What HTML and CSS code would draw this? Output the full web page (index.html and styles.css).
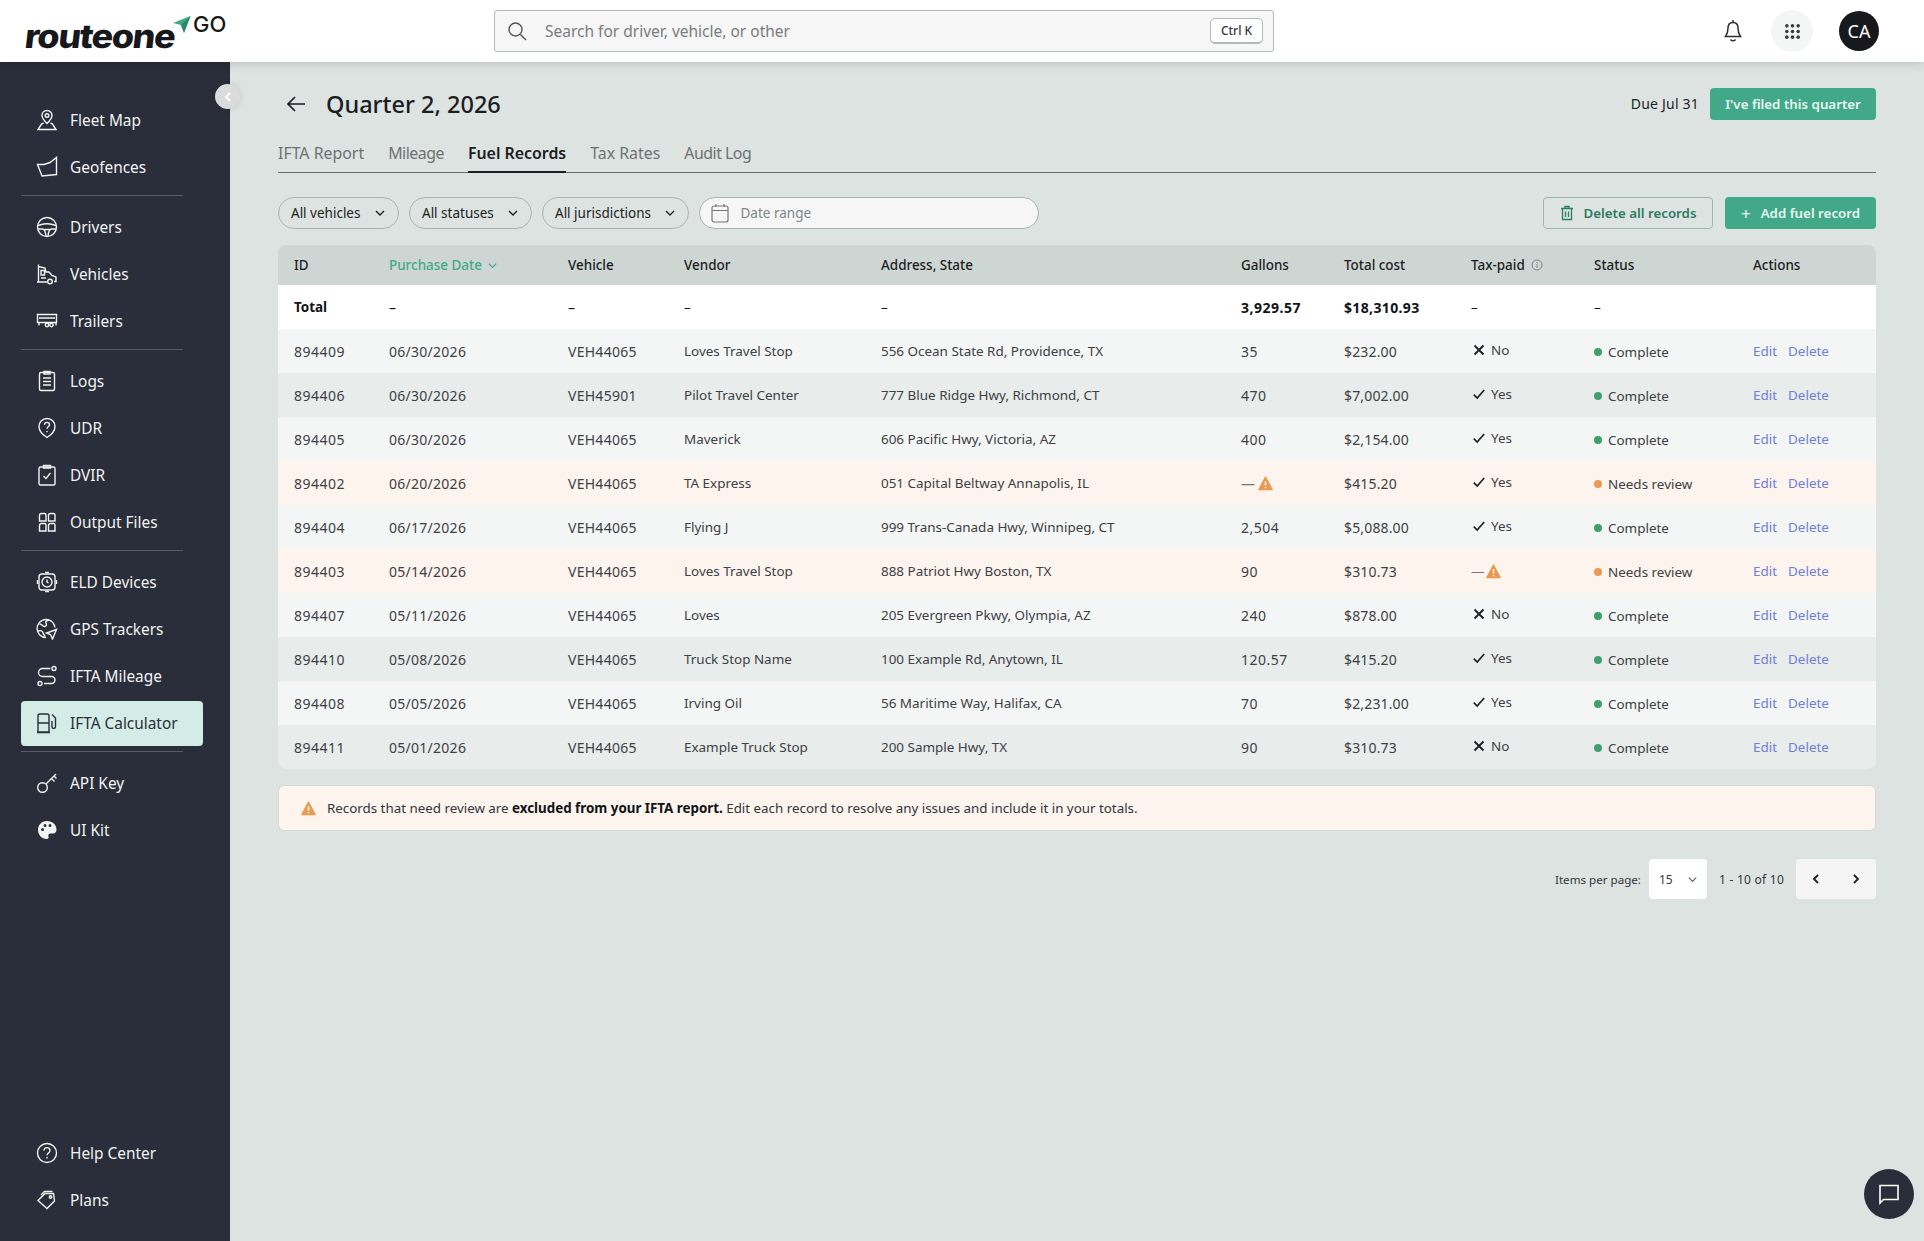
FILE: index.html
```html
<!DOCTYPE html>
<html lang="en">
<head>
    <meta charset="UTF-8">
    <meta name="viewport" content="width=device-width, initial-scale=1.0">
    <title>Fuel Records</title>
    <link rel="stylesheet" href="styles.css">
</head>
<body>

<svg class="sprite" aria-hidden="true">
    <symbol id="warn" viewBox="0 0 16 16"><path d="M8 1.2 15.2 14.6H.8z" fill="#e99a50" stroke="#e99a50" stroke-width="1.4" stroke-linejoin="round"/><path d="M8 5.6v4.6M8 11.6v1.4" stroke="#fff" stroke-width="1.6"/></symbol>
    <symbol id="check" viewBox="0 0 14 14"><path d="M1.8 7.6 5.2 11l7-8" fill="none" stroke="#1b1d22" stroke-width="1.6"/></symbol>
    <symbol id="cross" viewBox="0 0 14 14"><path d="M2.5 2.5l9 9M11.5 2.5l-9 9" fill="none" stroke="#1b1d22" stroke-width="1.8"/></symbol>
    <symbol id="chev" viewBox="0 0 12 12"><path d="M2 4l4 4 4-4" fill="none" stroke="currentColor" stroke-width="1.4"/></symbol>
</svg>

<header class="topbar">
    <div class="logo">
        <span class="logo-word">routeone</span>
        <svg class="logo-plane" viewBox="0 0 18 18"><path d="M0 7 17.5 0 11 17 8 9z" fill="#3fa985"/><path d="M8 9 17.5 0 11 17z" fill="#2c8a69"/></svg>
        <span class="logo-go">GO</span>
    </div>
    <div class="search">
        <svg class="search-icon" viewBox="0 0 20 20"><circle cx="8.5" cy="8.5" r="6.5" fill="none" stroke="#555" stroke-width="1.4"/><path d="M13.4 13.4 19 19" stroke="#555" stroke-width="1.4"/></svg>
        <span class="search-text">Search for driver, vehicle, or other</span>
        <span class="kbd">Ctrl K</span>
    </div>
    <div class="top-actions">
        <svg class="bell" viewBox="0 0 18 24"><path d="M9 3.5c-3.4 0-5 2.6-5 5.6 0 4.4-1 6.4-2.5 8.4h15C15 15.5 14 13.5 14 9.1c0-3-1.6-5.6-5-5.6z" fill="none" stroke="#2b2d33" stroke-width="1.5"/><path d="M9 1v2.5M6.500 20.500c.6 1.600 4.400 1.600 5 0" fill="none" stroke="#2b2d33" stroke-width="1.5"/></svg>
        <div class="apps">
            <svg viewBox="0 0 18 18" width="17" height="17" fill="#3a3c42"><circle cx="3" cy="3" r="1.9"/><circle cx="9" cy="3" r="1.9"/><circle cx="15" cy="3" r="1.9"/><circle cx="3" cy="9" r="1.9"/><circle cx="9" cy="9" r="1.9"/><circle cx="15" cy="9" r="1.9"/><circle cx="3" cy="15" r="1.9"/><circle cx="9" cy="15" r="1.9"/><circle cx="15" cy="15" r="1.9"/></svg>
        </div>
        <div class="avatar">CA</div>
    </div>
</header>

<div class="shell">
    <nav class="sidebar">
        <a class="nav-item"><svg class="nav-icon" viewBox="0 0 22 22"><path d="M11 1.500c-3 0-5 2.200-5 5 0 3 3 6 5 8 2-2 5-5 5-8 0-2.800-2-5-5-5z"/><circle cx="11" cy="6.500" r="1.800"/><path d="M7.500 14 5.500 15 2 20.500h18L16.500 15l-2-1"/></svg>Fleet Map</a>
        <a class="nav-item"><svg class="nav-icon" viewBox="0 0 22 22"><path d="M1.500 8.500 8 8.500 14 6.500 20.500 1.500V18.500L6 20z"/></svg>Geofences</a>
        <div class="nav-sep"></div>
        <a class="nav-item"><svg class="nav-icon" viewBox="0 0 22 22"><circle cx="11" cy="11" r="9.500"/><path d="M1.800 9.500c3-.6 5-1.800 9.200-1.800s6.200 1.200 9.200 1.800M2 13h4.500c2 0 3 2 3.500 7.300M20 13h-4.500c-2 0-3 2-3.500 7.300M8.500 13.500h5"/></svg>Drivers</a>
        <a class="nav-item"><svg class="nav-icon" viewBox="0 0 22 22"><path d="M2.500 1.500v17M1 19h10M2.500 3.500 9 5l1 4h3l3 3.500 4 1.500v4.500h-2M5 7.500h3.500V12H5zM5 15h5"/><circle cx="14" cy="18.500" r="2.300"/></svg>Vehicles</a>
        <a class="nav-item"><svg class="nav-icon" viewBox="0 0 22 22"><path d="M1.500 4.500h19v8h-19zM3 8h16M3 12.500v3M20 12.500v3"/><circle cx="11" cy="15" r="1.700"/><circle cx="15.500" cy="15" r="1.700"/></svg>Trailers</a>
        <div class="nav-sep"></div>
        <a class="nav-item"><svg class="nav-icon" viewBox="0 0 22 22"><rect x="3.500" y="2.500" width="15" height="18" rx="1.500"/><path d="M8 1.500h6v2.500H8zM7 8h8M7 11.500h8M7 15h8"/></svg>Logs</a>
        <a class="nav-item"><svg class="nav-icon" viewBox="0 0 22 22"><path d="M11 20.500C7 18 3 15 3 9.500a8 8 0 0 1 16 0C19 15 15 18 11 20.500z"/><path d="M8.500 7.800c0-3.200 5-3.200 5 0 0 2-2.500 2-2.500 4M11 14v1.200"/></svg>UDR</a>
        <a class="nav-item"><svg class="nav-icon" viewBox="0 0 22 22"><rect x="3" y="3" width="16" height="18" rx="1.500"/><path d="M7.500 1.500h7V4h-7zM7.500 12l2.500 2.500 4.500-5.500"/></svg>DVIR</a>
        <a class="nav-item"><svg class="nav-icon" viewBox="0 0 22 22"><path d="M3.500 10V4.500a2 2 0 0 1 2-2h3A1.500 1.500 0 0 1 10 4v6zM12.500 10V4.500a2 2 0 0 1 2-2h3A1.500 1.500 0 0 1 19 4v6zM3.500 20v-5.500a2 2 0 0 1 2-2h3A1.500 1.500 0 0 1 10 14v6zM12.500 20v-5.500a2 2 0 0 1 2-2h3a1.500 1.500 0 0 1 1.500 1.500v6z"/></svg>Output Files</a>
        <div class="nav-sep"></div>
        <a class="nav-item"><svg class="nav-icon" viewBox="0 0 22 22"><rect x="3" y="3" width="16" height="16" rx="3"/><circle cx="11" cy="11" r="5"/><path d="M11 8.500V11l1.600 1M1.500 9v4M20.500 9v4M9 1.500h4M9 20.500h4"/></svg>ELD Devices</a>
        <a class="nav-item"><svg class="nav-icon" viewBox="0 0 22 22"><path d="M10 19.500a9 9 0 1 1 9-10M3.500 6c3 0 3 2.500 5 2.500s2.500-2 1.500-3.500 1-2.500 3-3M2 13c3-1 4.500 0 5 2s1.500 2 2 3.500"/><path d="M20.500 11.500 10.500 15l4 1.500 2 4.500z"/></svg>GPS Trackers</a>
        <a class="nav-item"><svg class="nav-icon" viewBox="0 0 22 22"><circle cx="18" cy="3.500" r="2"/><circle cx="4" cy="18.500" r="2"/><path d="M14.500 3.500H6.500a4 4 0 0 0 0 8h9a3.500 3.500 0 0 1 0 7H8"/></svg>IFTA Mileage</a>
        <a class="nav-item active"><svg class="nav-icon" viewBox="0 0 22 22"><path d="M2 20V4a2 2 0 0 1 2-2h7a2 2 0 0 1 2 2v16zM2 11h11M1 20.500h13M16 2.500l3.500 3.500v9a1.800 1.800 0 0 1-3.500 0V9"/></svg>IFTA Calculator</a>
        <div class="nav-sep"></div>
        <a class="nav-item"><svg class="nav-icon" viewBox="0 0 22 22"><circle cx="6.500" cy="15.500" r="4.800"/><path d="M10 12 20 2M15.500 6.500l3 3M18 4l2.500 2.500"/></svg>API Key</a>
        <a class="nav-item"><svg class="nav-icon filled" viewBox="0 0 22 22"><path fill-rule="evenodd" d="M11 2C5.500 2 2 6 2 11s4 9 8.500 9c2 0 2.500-1.300 2-2.500-.6-1.500.2-3 2-3h2.500c2 0 3.500-1.500 3.500-3.800C20.500 5.500 16.500 2 11 2zM6.500 12a1.500 1.500 0 1 1 0-3 1.500 1.500 0 0 1 0 3zm2.500-4a1.500 1.500 0 1 1 0-3 1.500 1.500 0 0 1 0 3zm5 0a1.500 1.500 0 1 1 0-3 1.500 1.500 0 0 1 0 3z"/></svg>UI Kit</a>
        <div class="nav-bottom">
            <a class="nav-item"><svg class="nav-icon" viewBox="0 0 22 22"><circle cx="11" cy="11" r="9.500"/><path d="M8 8.500c0-3.800 6-3.800 6 0 0 2.500-3 2.500-3 4.800M11 15v1.400"/></svg>Help Center</a>
            <a class="nav-item"><svg class="nav-icon" viewBox="0 0 22 22"><path d="M2 11.500 9 4.500h8.500l1 7.500-7.500 7.500z"/><circle cx="14.500" cy="8" r="1.200"/><path d="M5 6 8.500 2.500h8"/></svg>Plans</a>
        </div>
    </nav>
    <button class="collapse">
        <svg viewBox="0 0 10 12" width="10" height="12"><path d="M7 2 3 6l4 4" fill="none" stroke="#fff" stroke-width="1.800"/></svg>
    </button>

    <main class="content">
        <div class="page-head">
            <svg class="back" viewBox="0 0 20 18"><path d="M19 9H2M9 2 2 9l7 7" fill="none" stroke="#1b1d22" stroke-width="1.700"/></svg>
            <h1>Quarter 2, 2026</h1>
            <span class="due">Due Jul 31</span>
            <button class="btn btn-green">I've filed this quarter</button>
        </div>

        <div class="tabs">
            <a class="tab">IFTA Report</a>
            <a class="tab tab-tight">Mileage</a>
            <a class="tab current">Fuel Records</a>
            <a class="tab">Tax Rates</a>
            <a class="tab tab-tight">Audit Log</a>
        </div>

        <div class="filters">
            <div class="pill w-vehicles">All vehicles <svg class="pill-chev"><use href="#chev"/></svg></div>
            <div class="pill w-statuses">All statuses <svg class="pill-chev"><use href="#chev"/></svg></div>
            <div class="pill w-juris">All jurisdictions <svg class="pill-chev"><use href="#chev"/></svg></div>
            <div class="pill date-range">
                <svg class="cal" viewBox="0 0 18 20"><rect x="1" y="3" width="16" height="16" rx="2" fill="none" stroke="#777" stroke-width="1.200"/><path d="M1 7.500h16M5 1v3M13 1v3" stroke="#777" stroke-width="1.200"/></svg>
                Date range
            </div>
            <button class="btn btn-outline">
                <svg class="trash" viewBox="0 0 14 16"><path d="M1 3.500h12M5 3.500V1.500h4v2M2.500 3.500v11h9v-11M5.500 6.500v5.500M8.500 6.500v5.500" fill="none" stroke="#2f7a63" stroke-width="1.300"/></svg>
                Delete all records
            </button>
            <button class="btn btn-green btn-add"><span class="plus">+</span> Add fuel record</button>
        </div>

        <table class="records">
            <colgroup>
                <col class="c-id"><col class="c-date"><col class="c-veh"><col class="c-vendor"><col class="c-addr"><col class="c-gal"><col class="c-cost"><col class="c-tax"><col class="c-status"><col class="c-act">
            </colgroup>
            <thead>
                <tr>
                    <th>ID</th>
                    <th class="sorted">Purchase Date <svg class="sort-chev"><use href="#chev"/></svg></th>
                    <th>Vehicle</th>
                    <th>Vendor</th>
                    <th>Address, State</th>
                    <th>Gallons</th>
                    <th>Total cost</th>
                    <th>Tax-paid <svg class="info" viewBox="0 0 12 12"><circle cx="6" cy="6" r="5" fill="none" stroke="#7f8785"/><path d="M6 5.200v3.500M6 3v1.200" stroke="#7f8785"/></svg></th>
                    <th>Status</th>
                    <th>Actions</th>
                </tr>
            </thead>
            <tbody>
                <tr class="total">
                    <td>Total</td><td class="dash">–</td><td class="dash">–</td><td class="dash">–</td><td class="dash">–</td>
                    <td>3,929.57</td><td>$18,310.93</td><td class="dash">–</td><td class="dash">–</td><td></td>
                </tr>
                <tr>
                    <td>894409</td><td>06/30/2026</td><td>VEH44065</td><td>Loves Travel Stop</td><td>556 Ocean State Rd, Providence, TX</td><td>35</td><td>$232.00</td>
                    <td><span class="tax"><svg class="tax-icon"><use href="#cross"/></svg>No</span></td>
                    <td><span class="status"><i class="dot ok"></i>Complete</span></td>
                    <td><a class="link">Edit</a><a class="link">Delete</a></td>
                </tr>
                <tr>
                    <td>894406</td><td>06/30/2026</td><td>VEH45901</td><td>Pilot Travel Center</td><td>777 Blue Ridge Hwy, Richmond, CT</td><td>470</td><td>$7,002.00</td>
                    <td><span class="tax"><svg class="tax-icon"><use href="#check"/></svg>Yes</span></td>
                    <td><span class="status"><i class="dot ok"></i>Complete</span></td>
                    <td><a class="link">Edit</a><a class="link">Delete</a></td>
                </tr>
                <tr>
                    <td>894405</td><td>06/30/2026</td><td>VEH44065</td><td>Maverick</td><td>606 Pacific Hwy, Victoria, AZ</td><td>400</td><td>$2,154.00</td>
                    <td><span class="tax"><svg class="tax-icon"><use href="#check"/></svg>Yes</span></td>
                    <td><span class="status"><i class="dot ok"></i>Complete</span></td>
                    <td><a class="link">Edit</a><a class="link">Delete</a></td>
                </tr>
                <tr class="review">
                    <td>894402</td><td>06/20/2026</td><td>VEH44065</td><td>TA Express</td><td>051 Capital Beltway Annapolis, IL</td>
                    <td><span class="missing">— <svg class="warn"><use href="#warn"/></svg></span></td><td>$415.20</td>
                    <td><span class="tax"><svg class="tax-icon"><use href="#check"/></svg>Yes</span></td>
                    <td><span class="status"><i class="dot bad"></i>Needs review</span></td>
                    <td><a class="link">Edit</a><a class="link">Delete</a></td>
                </tr>
                <tr>
                    <td>894404</td><td>06/17/2026</td><td>VEH44065</td><td>Flying J</td><td>999 Trans-Canada Hwy, Winnipeg, CT</td><td>2,504</td><td>$5,088.00</td>
                    <td><span class="tax"><svg class="tax-icon"><use href="#check"/></svg>Yes</span></td>
                    <td><span class="status"><i class="dot ok"></i>Complete</span></td>
                    <td><a class="link">Edit</a><a class="link">Delete</a></td>
                </tr>
                <tr class="review">
                    <td>894403</td><td>05/14/2026</td><td>VEH44065</td><td>Loves Travel Stop</td><td>888 Patriot Hwy Boston, TX</td><td>90</td><td>$310.73</td>
                    <td><span class="missing">— <svg class="warn"><use href="#warn"/></svg></span></td>
                    <td><span class="status"><i class="dot bad"></i>Needs review</span></td>
                    <td><a class="link">Edit</a><a class="link">Delete</a></td>
                </tr>
                <tr>
                    <td>894407</td><td>05/11/2026</td><td>VEH44065</td><td>Loves</td><td>205 Evergreen Pkwy, Olympia, AZ</td><td>240</td><td>$878.00</td>
                    <td><span class="tax"><svg class="tax-icon"><use href="#cross"/></svg>No</span></td>
                    <td><span class="status"><i class="dot ok"></i>Complete</span></td>
                    <td><a class="link">Edit</a><a class="link">Delete</a></td>
                </tr>
                <tr>
                    <td>894410</td><td>05/08/2026</td><td>VEH44065</td><td>Truck Stop Name</td><td>100 Example Rd, Anytown, IL</td><td>120.57</td><td>$415.20</td>
                    <td><span class="tax"><svg class="tax-icon"><use href="#check"/></svg>Yes</span></td>
                    <td><span class="status"><i class="dot ok"></i>Complete</span></td>
                    <td><a class="link">Edit</a><a class="link">Delete</a></td>
                </tr>
                <tr>
                    <td>894408</td><td>05/05/2026</td><td>VEH44065</td><td>Irving Oil</td><td>56 Maritime Way, Halifax, CA</td><td>70</td><td>$2,231.00</td>
                    <td><span class="tax"><svg class="tax-icon"><use href="#check"/></svg>Yes</span></td>
                    <td><span class="status"><i class="dot ok"></i>Complete</span></td>
                    <td><a class="link">Edit</a><a class="link">Delete</a></td>
                </tr>
                <tr>
                    <td>894411</td><td>05/01/2026</td><td>VEH44065</td><td>Example Truck Stop</td><td>200 Sample Hwy, TX</td><td>90</td><td>$310.73</td>
                    <td><span class="tax"><svg class="tax-icon"><use href="#cross"/></svg>No</span></td>
                    <td><span class="status"><i class="dot ok"></i>Complete</span></td>
                    <td><a class="link">Edit</a><a class="link">Delete</a></td>
                </tr>
            </tbody>
        </table>

        <div class="alert">
            <svg class="alert-icon"><use href="#warn"/></svg>
            <span>Records that need review are <b>excluded from your IFTA report.</b> Edit each record to resolve any issues and include it in your totals.</span>
        </div>

        <div class="pager">
            <span class="per-label">Items per page:</span>
            <div class="per-page">15 <svg class="per-chev"><use href="#chev"/></svg></div>
            <span class="range">1 - 10 of 10</span>
            <div class="pager-btns">
                <svg viewBox="0 0 10 12" width="10" height="12"><path d="M7 2 3 6l4 4" fill="none" stroke="#1b1d22" stroke-width="1.800"/></svg>
                <svg viewBox="0 0 10 12" width="10" height="12"><path d="M3 2l4 4-4 4" fill="none" stroke="#1b1d22" stroke-width="1.800"/></svg>
            </div>
        </div>
    </main>
</div>

<button class="chat">
    <svg viewBox="0 0 22 22" width="22" height="22"><path d="M2 2.500h18v14H5.500L2 20z" fill="none" stroke="#fff" stroke-width="1.600"/></svg>
</button>

</body>
</html>
```

FILE: styles.css
```css
* {
    box-sizing: border-box;
}
html, body {
    height: 100%;
}
body {
    margin: 0;
    font-family: "Noto Sans", Arial, sans-serif;
    font-size: 13px;
    color: #1b1d22;
    background-color: #dde3e1;
    overflow: hidden;
}
.sprite {
    display: none;
}
button {
    font-family: inherit;
    border: none;
    cursor: pointer;
}

/* top bar */
.topbar {
    height: 62px;
    background-color: #fff;
    box-shadow: 0 2px 10px rgba(0, 0, 0, 0.14);
    display: flex;
    align-items: center;
    position: relative;
    z-index: 3;
}
.logo {
    width: 494px;
    height: 62px;
    padding-left: 25px;
    display: flex;
}
.logo-word {
    font-family: Inter, sans-serif;
    font-weight: 800;
    font-size: 33px;
    letter-spacing: -1.3px;
    color: #17181b;
    line-height: 34px;
    margin-top: 19px;
    width: 148px;
    height: 34px;
    display: inline-block;
    transform-origin: left center;
    transform: scaleX(1.09) skewX(-6deg);
}
.logo-plane {
    width: 18px;
    height: 18px;
    margin-top: 16px;
}
.logo-go {
    font-family: Inter, sans-serif;
    font-weight: 500;
    font-size: 22px;
    line-height: 20px;
    margin-top: 14px;
    margin-left: 2px;
    color: #17181b;
}
.search {
    width: 780px;
    height: 42px;
    background-color: #f5f6f5;
    border: 1px solid #b3bbb9;
    border-radius: 3px;
    display: flex;
    align-items: center;
    padding: 0 10px 0 12px;
}
.search-icon {
    width: 20px;
    height: 20px;
}
.search-text {
    margin-left: 18px;
    font-size: 15.5px;
    color: #7a7d80;
    flex: 1;
}
.kbd {
    width: 53px;
    height: 26px;
    background-color: #fff;
    border: 1px solid #b3bbb9;
    border-bottom-width: 2px;
    border-radius: 5px;
    font-size: 12px;
    font-weight: 500;
    color: #33363b;
    display: flex;
    align-items: center;
    justify-content: center;
}
.top-actions {
    flex: 1;
    display: flex;
    align-items: center;
    justify-content: flex-end;
    padding-right: 45px;
}
.bell {
    width: 18px;
    height: 24px;
    margin-right: 29px;
}
.apps {
    width: 42px;
    height: 42px;
    border-radius: 50%;
    background-color: #f4f5f5;
    display: flex;
    align-items: center;
    justify-content: center;
    margin-right: 26px;
}
.avatar {
    width: 40px;
    height: 40px;
    border-radius: 50%;
    background-color: #17191c;
    color: #fff;
    font-size: 18px;
    display: flex;
    align-items: center;
    justify-content: center;
}

/* sidebar */
.shell {
    display: flex;
    height: calc(100% - 62px);
    position: relative;
}
.sidebar {
    width: 230px;
    flex-shrink: 0;
    background-color: #2a2d3a;
    padding: 35px 47px 17px 21px;
    display: flex;
    flex-direction: column;
}
.nav-item {
    height: 47px;
    flex-shrink: 0;
    display: flex;
    align-items: center;
    padding-left: 15px;
    padding-bottom: 1px;
    color: #f2f4f4;
    font-size: 15.4px;
    white-space: nowrap;
}
.nav-icon {
    width: 22px;
    height: 22px;
    margin-right: 12px;
    fill: none;
    stroke: currentColor;
    stroke-width: 1.4;
    flex-shrink: 0;
}
.nav-icon.filled {
    fill: currentColor;
    stroke: none;
}
.nav-item.active {
    background-color: #d3ece5;
    color: #2a2d3a;
    border-radius: 4px;
    height: 45px;
    margin: 1px -20px 1px 0;
}
.nav-sep {
    height: 1px;
    background-color: #565a67;
    margin: 4px 0 8px;
    flex-shrink: 0;
}
.nav-bottom {
    margin-top: auto;
}
.collapse {
    position: absolute;
    left: 215px;
    top: 22px;
    width: 25px;
    height: 25px;
    padding: 0;
    border-radius: 50%;
    background-color: #dadcdc;
    box-shadow: 0 0 6px rgba(0, 0, 0, 0.12);
    display: flex;
    align-items: center;
    justify-content: center;
}

/* main */
.content {
    flex: 1;
    padding: 0 48px;
    min-width: 0;
}
.page-head {
    height: 71px;
    padding-top: 12px;
    display: flex;
    align-items: center;
}
.back {
    width: 20px;
    height: 18px;
    margin-left: 8px;
    margin-right: 20px;
}
h1 {
    margin: 0;
    font-size: 23.5px;
    font-weight: 500;
    flex: 1;
}
.due {
    font-size: 14px;
    letter-spacing: 0.2px;
    margin-right: 11px;
}
.btn {
    height: 32px;
    border-radius: 4px;
    font-size: 13.3px;
    font-weight: 600;
    padding: 0 15px;
    display: flex;
    align-items: center;
    justify-content: center;
    white-space: nowrap;
}
.btn-green {
    background-color: #41a987;
    color: #e9f7f2;
}
.page-head .btn {
    width: 166px;
    padding: 0;
}
.tabs {
    display: flex;
    gap: 24px;
    border-bottom: 1px solid #676c6c;
    height: 40px;
}
.tab {
    font-size: 15.9px;
    color: #6c7272;
    height: 40px;
    line-height: 40px;
    white-space: nowrap;
}
.tab-tight {
    letter-spacing: -0.5px;
}
.tab.current {
    color: #1b1d22;
    font-weight: 600;
    border-bottom: 2px solid #1b1d22;
}
.filters {
    display: flex;
    align-items: center;
    margin-top: 24px;
    margin-bottom: 16px;
    gap: 10.5px;
}
.pill {
    height: 32px;
    border: 1px solid #abb3b1;
    border-radius: 16px;
    display: flex;
    align-items: center;
    padding: 0 12px;
    justify-content: space-between;
    font-size: 13.5px;
    white-space: nowrap;
}
.w-vehicles { width: 120.5px; }
.w-statuses { width: 122.5px; }
.w-juris { width: 147px; }
.pill-chev {
    width: 12px;
    height: 12px;
}
.date-range {
    width: 340px;
    margin-left: -1px;
    background-color: #f5f6f5;
    color: #80868a;
    justify-content: flex-start;
    padding-left: 11px;
}
.cal {
    width: 18px;
    height: 20px;
    margin-right: 12px;
}
.btn-outline {
    margin-left: auto;
    margin-right: 1.5px;
    width: 170px;
    padding: 0;
    background: transparent;
    border: 1px solid #9bb5ac;
    color: #2f7a63;
}
.trash {
    width: 14px;
    height: 16px;
    margin-right: 10px;
}
.btn-add {
    width: 151px;
    padding: 0;
}
.plus {
    font-size: 17px;
    font-weight: 400;
    margin-right: 10px;
    line-height: 1;
}

/* table */
.records {
    width: 100%;
    table-layout: fixed;
    border-collapse: separate;
    border-spacing: 0;
    border-radius: 8px;
    overflow: hidden;
}
.c-id { width: 95px; }
.c-date { width: 179px; }
.c-veh { width: 116px; }
.c-vendor { width: 197px; }
.c-addr { width: 360px; }
.c-gal { width: 103px; }
.c-cost { width: 127px; }
.c-tax { width: 123px; }
.c-status { width: 159px; }
.c-act { width: 139px; }
th, td {
    text-align: left;
    padding: 0 0 0 16px;
    white-space: nowrap;
    font-size: 13.45px;
}
th {
    height: 40px;
    background-color: #cdd6d3;
    font-weight: 500;
}
th.sorted {
    color: #41a987;
}
.sort-chev {
    width: 11px;
    height: 11px;
    vertical-align: -1px;
    margin-left: 2px;
}
.info {
    width: 12px;
    height: 12px;
    margin-left: 3px;
    vertical-align: -1px;
}
td {
    height: 44px;
    color: #3d4045;
}
/* the digits of the original font run wider than the fallback's */
td:nth-child(1), td:nth-child(6) {
    font-size: 14px;
    letter-spacing: 0.5px;
}
td:nth-child(2), td:nth-child(3) {
    font-size: 14px;
    letter-spacing: 0.27px;
}
td:nth-child(7) {
    font-size: 14px;
    letter-spacing: 0.15px;
}
tbody tr:nth-child(even) td {
    background-color: #f4f6f5;
}
tbody tr:nth-child(odd) td {
    background-color: #e8ecea;
}
tbody tr.total td {
    background-color: #fff;
    color: #111317;
    font-weight: 700;
}
tbody tr.total td:first-child {
    font-size: 13.45px;
    letter-spacing: 0;
}
tbody tr.total td:nth-child(7) {
    letter-spacing: 0.35px;
}
tbody tr.review td {
    background-color: #fdf4ee;
}
.dash {
    font-weight: 400 !important;
}
.tax {
    display: inline-flex;
    align-items: center;
}
.tax-icon {
    width: 14px;
    height: 14px;
    margin-right: 5px;
    margin-left: 1px;
}
.status {
    display: inline-flex;
    align-items: center;
}
.dot {
    width: 8px;
    height: 8px;
    border-radius: 50%;
    margin-right: 6px;
}
.dot.ok { background-color: #3f9f6f; }
.dot.bad { background-color: #e99a50; }
.link {
    color: #6f80d8;
    margin-right: 11px;
}
.missing {
    display: inline-flex;
    align-items: center;
    color: #777;
    gap: 2px;
}
.warn {
    width: 15px;
    height: 15px;
}

/* notice and paging */
.alert {
    margin-top: 16px;
    height: 46px;
    background-color: #fdf4ee;
    border: 1px solid #d3d9d6;
    border-radius: 6px;
    display: flex;
    align-items: center;
    padding-left: 22px;
    font-size: 13.35px;
    color: #33363b;
}
.alert b {
    color: #111317;
}
.alert-icon {
    width: 15px;
    height: 15px;
    margin-right: 11px;
}
.pager {
    margin-top: 28px;
    display: flex;
    align-items: center;
    justify-content: flex-end;
    font-size: 12px;
    color: #33363b;
}
.per-label {
    font-size: 11.6px;
}
.per-page {
    width: 58px;
    height: 40px;
    background-color: #fff;
    border-radius: 4px;
    margin-left: 8px;
    padding: 0 9px 0 10px;
    display: flex;
    align-items: center;
    justify-content: space-between;
}
.per-chev {
    width: 11px;
    height: 11px;
    color: #666;
}
.range {
    margin: 0 12px;
    letter-spacing: 0.25px;
}
.pager-btns {
    width: 80px;
    height: 40px;
    background-color: #f5f5f5;
    border-radius: 4px;
    display: flex;
    align-items: center;
    justify-content: space-around;
}
.chat {
    position: absolute;
    left: 1864px;
    top: 1169px;
    width: 50px;
    height: 50px;
    padding: 0;
    border-radius: 50%;
    background-color: #2a2d3a;
    display: flex;
    align-items: center;
    justify-content: center;
}
```
